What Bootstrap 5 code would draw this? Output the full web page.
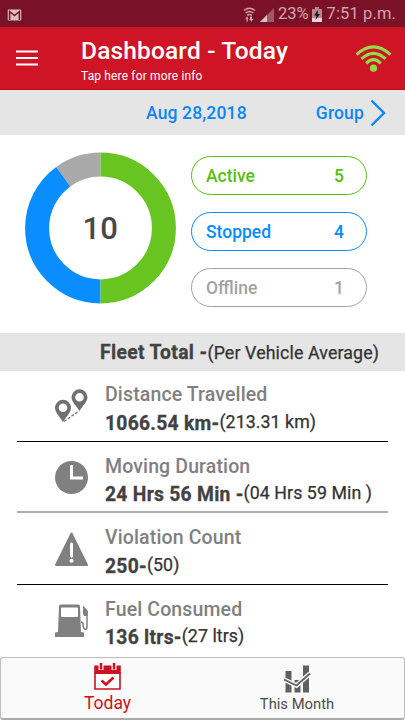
<!DOCTYPE html>
<html lang="en">
<head>
<meta charset="utf-8">
<meta name="viewport" content="width=device-width, initial-scale=1">
<title>Dashboard - Today</title>
<link href="https://cdn.jsdelivr.net/npm/bootstrap@5.3.0/dist/css/bootstrap.min.css" rel="stylesheet">
<style>
body{font-family:Roboto,sans-serif;width:405px;height:720px;overflow:hidden;background:#fff;color:#424242;line-height:1}
svg{display:block;flex:none}
.text-line{white-space:nowrap;line-height:1}
.status{height:27px;background:#7b1127;color:#d1a5ae;font-size:16.5px;padding:2px 9px 0 7px}
.battery-pct{margin:0 3px 0 4px}
.clock{margin-left:5px;letter-spacing:.12px}
.appbar{height:63px;background:#cf1426;color:#fff;padding-left:16px;padding-right:13px;border-bottom:1px solid #c30a12}
.menu-icon{margin-top:22px}
.wifi-icon{margin-top:17px}
.heading{margin:12px 0 0 43px}
.title{font-size:24.5px;font-weight:500;letter-spacing:.15px}
.subtitle{font-size:12px;letter-spacing:.15px;margin-top:6px}
.datebar{height:45px;background:#e5e5e5;color:#0c86fa;font-size:17.5px;font-weight:500;letter-spacing:.15px;padding-left:146px;padding-right:19px}
.datebar-label{padding-top:2px}
.summary{height:198px;padding:17px 38px 0 25px}
.ring-total{font-size:31px;font-weight:500;fill:#484848}
.pill{height:39px;width:176px;border:1px solid;padding:2px 22px 0 14px;font-size:17.5px;font-weight:500}
.pills{gap:17.2px;padding-top:4px}
.c-active{color:#58bf12}.c-stopped{color:#078bff}.c-offline{color:#a2a2a2}
.total-head{height:38px;background:#e5e5e5;padding-left:100px}
.strong-txt{font-size:19.3px;font-weight:700;letter-spacing:.28px;-webkit-text-stroke:.3px}
.total-head .strong-txt{padding-top:1px;letter-spacing:.35px}
.avg{font-size:17.8px;font-weight:400;color:#333;letter-spacing:.06px;-webkit-text-stroke:.25px}
.total-head .avg{letter-spacing:.12px;padding-top:1px}
.metrics{margin-top:-1px}
.metric{height:71.5px;margin:0 17px;padding-left:37px;border-bottom:1px solid #000}
.metric-2{border-bottom:2px solid #acacac}
.metric-4{border:0}
.metric-text{margin-left:17px;padding-top:15px}
.metric-label{font-size:19.5px;font-weight:500;color:#808080;letter-spacing:.13px}
.metric-value{margin-top:9px}
.metric-value .avg{margin-top:-1px}
.icon-box{width:34px;padding-top:19px}
.tabs{height:63px;background:#fafafa;border:1px solid #bdbdbd;border-bottom:2px solid #aaa;border-radius:3px}
.tab-today{width:213px;padding-top:5px;color:#cf1020;font-size:17.5px}
.tab-month{width:166px;padding-top:7px;color:#4b4b4b;font-size:14.8px}
.tab-label{margin-top:4px}
.tab-today .tab-label{margin-top:5px}
</style>
</head>
<body class="d-flex flex-column">
<div class="status d-flex align-items-center justify-content-between">
  <svg width="15" height="12" viewBox="0 0 15 12"><rect x=".7" y=".5" width="13.6" height="11" rx="1" fill="#d9bec4"/><path d="M2.6 11V2.5L7.5 6.5 12.4 2.5V11" fill="none" stroke="#7b1127" stroke-width="1.5"/></svg>
  <div class="d-flex align-items-center text-line">
    <svg width="13" height="15" viewBox="0 0 13 15"><g fill="none" stroke="#d1a5ae" stroke-width="1.500"><path d="M1 3.500Q6.500-.8 12 3.500M2.600 6Q6.500 2.800 10.400 6M4.200 8.300Q6.500 6.500 8.800 8.300"/></g><path d="M2 11.500 4.300 9.500 5.500 11.500H4.800V14.500H3.500V11.500ZM7 9.500H9V12H10.500L8.500 14.500 6 12H7Z" fill="#d1a5ae"/></svg>
    <svg class="ms-1" width="14" height="14" viewBox="0 0 14 14"><path d="M0 14 14 0V14Z" fill="#9e5866"/><path d="M0 14 7 7V14Z" fill="#d9bec4"/></svg>
    <span class="battery-pct">23%</span>
    <svg width="10" height="15" viewBox="0 0 10 15"><path d="M0 2H3V0H7V2H10V15H0Z" fill="#b98590"/><path d="M0 11H10V15H0Z" fill="#ead5d9"/><path d="M6 3 2 8.500H4.500L3.500 13 8 7H5.500Z" fill="#111"/></svg>
    <span class="clock">7:51 p.m.</span>
  </div>
</div>
<header class="appbar d-flex">
  <svg class="menu-icon" width="22" height="18" viewBox="0 0 22 18"><path d="M0 2.500H22M0 9H22M0 15.500H22" stroke="#fff" stroke-width="2"/></svg>
  <div class="heading">
    <div class="title text-line">Dashboard - Today</div>
    <div class="subtitle text-line">Tap here for more info</div>
  </div>
  <svg class="wifi-icon ms-auto" width="37" height="28" viewBox="0 0 38 29"><g fill="none" stroke="#92dc48" stroke-width="3.200"><path d="M1.500 11Q19-5 36.500 11M6.500 15.500Q19 4 31.500 15.500M11.500 20Q19 12.500 26.500 20"/></g><circle cx="19" cy="25" r="3.700" fill="#92dc48"/></svg>
</header>
<div class="datebar d-flex align-items-center justify-content-between text-line">
  <span class="datebar-label">Aug 28,2018</span>
  <span class="d-flex align-items-center"><span class="datebar-label me-1">Group</span><svg width="18" height="28" viewBox="0 0 18 28"><path d="M3.500 1.500 16 14 3.500 26.500" fill="none" stroke="#0c86fa" stroke-width="2.400"/></svg></span>
</div>
<section class="summary d-flex justify-content-between">
  <svg width="152" height="152" viewBox="0 0 152 152"><g fill="none" stroke-width="24" transform="rotate(-90 75.500 76)"><circle cx="75.500" cy="76" r="63.400" stroke="#a9a9a9" pathLength="10" stroke-dasharray="0 9 1 0"/><circle cx="75.500" cy="76" r="63.400" stroke="#0a8dff" pathLength="10" stroke-dasharray="0 5 4 1"/><circle cx="75.500" cy="76" r="63.400" stroke="#68c420" pathLength="10" stroke-dasharray="5 5"/></g><text class="ring-total" x="75.200" y="86.800" text-anchor="middle">10</text></svg>
  <div class="pills d-flex flex-column">
    <div class="pill rounded-pill d-flex align-items-center justify-content-between c-active"><span>Active</span><span>5</span></div>
    <div class="pill rounded-pill d-flex align-items-center justify-content-between c-stopped"><span>Stopped</span><span>4</span></div>
    <div class="pill rounded-pill d-flex align-items-center justify-content-between c-offline"><span>Offline</span><span>1</span></div>
  </div>
</section>
<div class="total-head d-flex align-items-center text-line"><span class="strong-txt">Fleet Total -</span><span class="avg">(Per Vehicle Average)</span></div>
<section class="metrics flex-grow-1">
  <div class="metric d-flex">
    <div class="icon-box"><svg width="34" height="34" viewBox="0 0 34 34"><path fill="#707070" fill-rule="evenodd" d="M9 33C5 27 1 23 1 18.800A8 8 0 0 1 17 18.800C17 23 13 27 9 33ZM9 23A4.300 4.300 0 1 0 9 14.400 4.300 4.300 0 0 0 9 23ZM25.500 22C21.500 16 17.500 12.500 17.500 8.300A8 8 0 0 1 33.500 8.300C33.500 12.500 29.500 16 25.500 22ZM25.500 12.500A4.300 4.300 0 1 0 25.500 3.900 4.300 4.300 0 0 0 25.500 12.500Z"/><path d="M10 32.500 25 22" stroke="#707070" stroke-width="1.300" stroke-dasharray="3 1.500"/></svg></div>
    <div class="metric-text text-line"><div class="metric-label">Distance Travelled</div><div class="metric-value d-flex"><span class="strong-txt">1066.54 km-</span><span class="avg">(213.31 km)</span></div></div>
  </div>
  <div class="metric metric-2 d-flex">
    <div class="icon-box"><svg width="34" height="34" viewBox="0 0 34 34"><circle cx="17.500" cy="16.500" r="16.500" fill="#808080"/><path d="M17.500 4V17H29" fill="none" stroke="#fff" stroke-width="3"/></svg></div>
    <div class="metric-text text-line"><div class="metric-label">Moving Duration</div><div class="metric-value d-flex"><span class="strong-txt">24 Hrs 56 Min -</span><span class="avg">(04 Hrs 59 Min )</span></div></div>
  </div>
  <div class="metric d-flex">
    <div class="icon-box"><svg width="34" height="34" viewBox="0 0 34 34"><path d="M17.500 1.500 33 33H2Z" fill="#808080" stroke="#808080" stroke-width="2" stroke-linejoin="round"/><path d="M17.500 12V24" stroke="#fff" stroke-width="3" stroke-linecap="round"/><circle cx="17.500" cy="28.800" r="2" fill="#fff"/></svg></div>
    <div class="metric-text text-line"><div class="metric-label">Violation Count</div><div class="metric-value d-flex"><span class="strong-txt">250-</span><span class="avg">(50)</span></div></div>
  </div>
  <div class="metric metric-4 d-flex">
    <div class="icon-box"><svg width="35" height="34" viewBox="0 0 35 34"><path fill="#808080" fill-rule="evenodd" d="M1 33V29Q1 28 4 28L5 2.500Q5 .5 7 .5H24Q26 .5 26 2.500L27 28Q30 28 30 29V33ZM8 3.500Q7 3.500 7 4.500V12Q7 13 8 13H23Q24 13 24 12V4.500Q24 3.500 23 3.500Z"/><path d="M29 2.500 33 7V23Q33 26 30.500 25 29 24 29 20 29 18 27 18" fill="none" stroke="#808080" stroke-width="1.500"/><path d="M29.500 3 33.500 7V12H30Q28 9 29.500 3Z" fill="#808080"/></svg></div>
    <div class="metric-text text-line"><div class="metric-label">Fuel Consumed</div><div class="metric-value d-flex"><span class="strong-txt">136 ltrs-</span><span class="avg">(27 ltrs)</span></div></div>
  </div>
</section>
<nav class="tabs d-flex text-line">
  <div class="tab-today d-flex flex-column align-items-center">
    <svg width="27" height="27" viewBox="0 0 27 27"><path d="M1 10H26V26H1Z" fill="#fff" stroke="#cf1020" stroke-width="1.600"/><path d="M.2 2.500H26.800V11H.2Z" fill="#cf1020"/><path d="M7 0V7M20 0V7" stroke="#fafafa" stroke-width="5"/><path d="M7 0V6.500M20 0V6.500" stroke="#cf1020" stroke-width="2.500"/><path d="M7.500 17.500 12 21.500 19.500 14.500" fill="none" stroke="#cf1020" stroke-width="2.600"/></svg>
    <span class="tab-label">Today</span>
  </div>
  <div class="tab-month d-flex flex-column align-items-center">
    <svg width="27" height="28" viewBox="0 0 27 28"><path fill="#606060" d="M1.500 6H7.500V27.500H1.500ZM10.500 15H16.500V27.500H10.500ZM19 .5H25V27.500H19Z"/><path d="M0 14.500 12.500 20.500 26 8.500" fill="none" stroke="#fafafa" stroke-width="4.600"/><path d="M0 14.500 12.500 20.500 26 8.500" fill="none" stroke="#606060" stroke-width="1.800"/></svg>
    <span class="tab-label">This Month</span>
  </div>
</nav>
<script src="https://cdn.jsdelivr.net/npm/bootstrap@5.3.0/dist/js/bootstrap.bundle.min.js"></script>
</body>
</html>
